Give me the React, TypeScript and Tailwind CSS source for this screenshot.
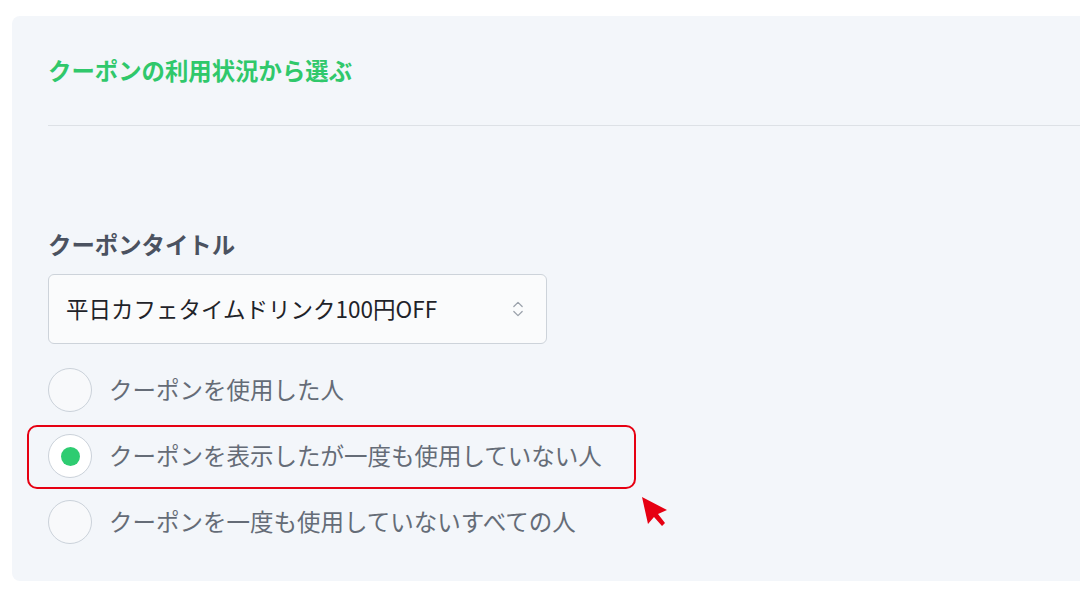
import { ChevronsUpDown } from "lucide-react";

const options = [
  { label: "クーポンを使用した人", checked: false },
  { label: "クーポンを表示したが一度も使用していない人", checked: true },
  { label: "クーポンを一度も使用していないすべての人", checked: false },
];

const Radio = ({ checked }: { checked: boolean }) => (
  <span
    className={`w-[44px] h-[44px] rounded-full border border-[#cbd2da] flex items-center justify-center shrink-0 ${
      checked ? "bg-white" : "bg-[#f8f9fb]"
    }`}
  >
    {checked && <span className="w-[19px] h-[19px] rounded-full bg-[#2ecc71]" />}
  </span>
);

export default function App() {
  return (
    <div
      className="relative w-[1080px] h-[600px] bg-white overflow-hidden"
      style={{ fontFamily: '"Noto Sans CJK JP", "Noto Sans", sans-serif' }}
    >
      <div className="ml-[12px] mt-[16px] w-[1120px] rounded-lg bg-[#f3f6fa] pl-[36px] pb-[37px]">
        {/* Heading */}
        <div className="pt-[38px] pb-[39px] border-b border-[#dde1e6]">
          <h2 className="text-[23.4px] leading-[32px] font-bold text-[#30c86b]">
            クーポンの利用状況から選ぶ
          </h2>
        </div>

        {/* Coupon title */}
        <div className="pt-[102px]">
          <p className="text-[23.4px] leading-[32px] font-bold text-[#4b5260]">
            クーポンタイトル
          </p>
          <div className="mt-[14px] w-[499px] h-[70px] rounded-md border border-[#cdd3da] bg-[#fafbfc] flex items-center justify-between pl-[17px] pr-[18px]">
            <span className="text-[22.5px] text-[#1f2329]">
              平日カフェタイムドリンク100円OFF
            </span>
            <ChevronsUpDown className="w-[20px] h-[20px] text-[#9aa1ab]" strokeWidth={1.5} />
          </div>
        </div>

        {/* Usage options */}
        <div className="mt-[24px] flex flex-col gap-[22px]">
          {options.map((o) => (
            <div key={o.label} className="relative flex items-center gap-[17px]">
              <Radio checked={o.checked} />
              <span className="text-[23.5px] text-[#656c77]">{o.label}</span>
              {o.checked && (
                <>
                  <div className="absolute -left-[21px] -top-[9px] w-[609px] h-[64px] rounded-[10px] border-2 border-[#e60012]" />
                  <svg
                    className="absolute left-[572px] top-[44px]"
                    width="70"
                    height="60"
                    viewBox="0 0 70 60"
                  >
                    <polygon
                      points="22,19 47,32 38,36 45,45 42,48 34,39 28,46"
                      fill="#e60012"
                    />
                  </svg>
                </>
              )}
            </div>
          ))}
        </div>
      </div>
    </div>
  );
}
